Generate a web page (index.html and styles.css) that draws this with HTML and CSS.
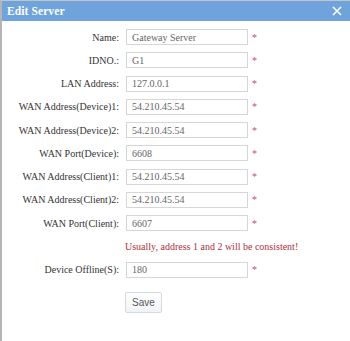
FILE: index.html
```html
<!DOCTYPE html>
<html lang="en">
<head>
  <meta charset="UTF-8" />
  <title>Edit Server</title>
  <link rel="stylesheet" href="styles.css">
</head>
<body>
  <div class="dialog">
    <header>
      <span class="title">Edit Server</span>
      <svg class="close" width="10" height="10" viewBox="0 0 10 10">
        <path d="M1 1 L9 9 M9 1 L1 9" stroke="#fff" stroke-width="1.6" fill="none" />
      </svg>
    </header>

    <form class="form">
      <div class="row">
        <label>Name:</label>
        <input type="text" value="Gateway Server">
        <span class="req">*</span>
      </div>
      <div class="row">
        <label>IDNO.:</label>
        <input type="text" value="G1">
        <span class="req">*</span>
      </div>
      <div class="row">
        <label>LAN Address:</label>
        <input type="text" value="127.0.0.1">
        <span class="req">*</span>
      </div>
      <div class="row">
        <label>WAN Address(Device)1:</label>
        <input type="text" value="54.210.45.54">
        <span class="req">*</span>
      </div>
      <div class="row">
        <label>WAN Address(Device)2:</label>
        <input type="text" value="54.210.45.54">
        <span class="req">*</span>
      </div>
      <div class="row">
        <label>WAN Port(Device):</label>
        <input type="text" value="6608">
        <span class="req">*</span>
      </div>
      <div class="row">
        <label>WAN Address(Client)1:</label>
        <input type="text" value="54.210.45.54">
        <span class="req">*</span>
      </div>
      <div class="row">
        <label>WAN Address(Client)2:</label>
        <input type="text" value="54.210.45.54">
        <span class="req">*</span>
      </div>
      <div class="row">
        <label>WAN Port(Client):</label>
        <input type="text" value="6607">
        <span class="req">*</span>
      </div>
      <div class="row note">Usually, address 1 and 2 will be consistent!</div>
      <div class="row">
        <label>Device Offline(S):</label>
        <input type="text" value="180">
        <span class="req">*</span>
      </div>
      <div class="actions">
        <button type="button">Save</button>
      </div>
    </form>
  </div>
</body>
</html>
```

FILE: styles.css
```css
body {
  margin: 0;
  background-color: #ffffff;
  font-family: "Liberation Serif", "Times New Roman", "DejaVu Serif", serif;
  color: #333333;
}
.dialog {
  border-left: 2px solid #b4b4b4;
  border-top: 1px solid #c4c4c4;
  height: 340px;
}
header {
  background-color: #6fa3db;
  height: 20px;
  display: flex;
  justify-content: space-between;
  align-items: center;
  padding: 0 8px 0 5px;
}
.title {
  color: white;
  font-weight: bold;
  font-size: 11.5px;
  letter-spacing: 0.1px;
}
.close {
  display: block;
}
.form {
  padding-top: 8px;
  font-size: 10px;
}
.row {
  display: flex;
  align-items: center;
  height: 16px;
  margin-bottom: 7.25px;
}
.row label {
  width: 117px;
  text-align: right;
  margin-right: 7px;
  color: #333333;
  font-family: "Liberation Serif", "Times New Roman", serif;
}
.row input {
  box-sizing: border-box;
  width: 122px;
  height: 16px;
  border: 1px solid #d6d6d6;
  padding: 0 5px;
  font-family: "Liberation Serif", "Times New Roman", serif;
  font-size: 10px;
  color: #666666;
  background: #ffffff;
}
.req {
  color: #c8506a;
  margin-left: 4px;
  font-size: 10px;
}
.note {
  padding-left: 123px;
  color: #b0303c;
}
.actions {
  padding-left: 123px;
  padding-top: 6.75px;
}
.actions button {
  width: 37px;
  height: 21px;
  padding: 0;
  border: 1px solid #d4dae0;
  border-radius: 2px;
  background: linear-gradient(#ffffff, #f0f3f6);
  color: #555555;
  font-family: "Liberation Sans", Arial, sans-serif;
  font-size: 10px;
}
```
